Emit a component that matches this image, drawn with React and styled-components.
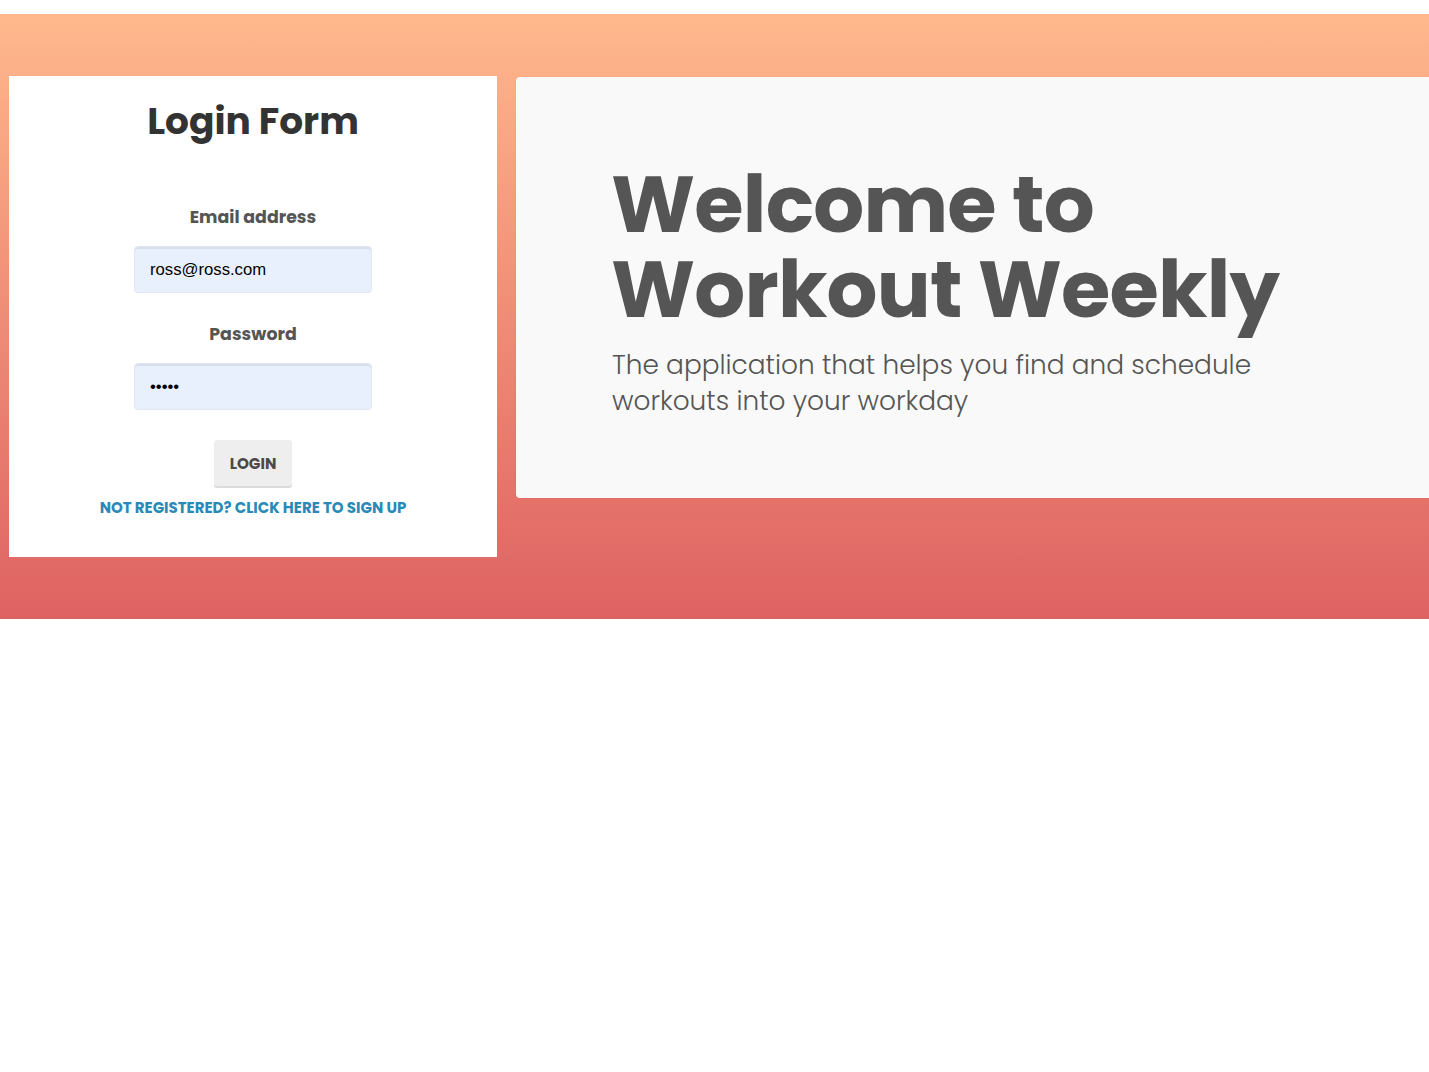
import React, { useState } from "react";
import styled, { createGlobalStyle } from "styled-components";

const GlobalStyle = createGlobalStyle`
  html, body {
    margin: 0;
    padding: 0;
    background: #ffffff;
    overflow-x: hidden;
  }
  body {
    font-family: "Poppins", Inter, "Noto Sans", sans-serif;
  }
`;

const Page = styled.div`
  padding-top: 14px;
`;

const Hero = styled.section`
  height: 605px;
  background: linear-gradient(to bottom, #ffb88c, #de6262);
  overflow: hidden;
  display: flex;
  align-items: flex-start;
  gap: 19px;
  padding: 62px 0 0 9px;
  box-sizing: border-box;
`;

const LoginCard = styled.div`
  flex: 0 0 488px;
  height: 481px;
  background: #ffffff;
  box-sizing: border-box;
  padding-top: 21px;
  display: flex;
  flex-direction: column;
  align-items: center;
`;

const Title = styled.h2`
  margin: 0 0 60px;
  font-size: 37.5px;
  line-height: 48px;
  font-weight: 700;
  color: #333;
`;

const StyledForm = styled.form`
  display: flex;
  flex-direction: column;
  align-items: center;
`;

const Label = styled.label`
  font-size: 17.4px;
  line-height: 24px;
  font-weight: 700;
  color: #555;
  margin: ${(props) => (props.$first ? "0" : "29px")} 0 17px;
`;

const Input = styled.input`
  width: 238px;
  height: 47px;
  box-sizing: border-box;
  padding: 0 15px;
  font-family: "Liberation Sans", Arial, sans-serif;
  font-size: 16.7px;
  color: #000;
  background: #e8f0fe;
  border: 1px solid #e2e7ef;
  border-radius: 4px;
  box-shadow: inset 0 2px 0 rgba(0, 0, 0, 0.07);
  &:focus {
    outline: none;
  }
`;

const Button = styled.button`
  margin-top: 30px;
  width: 78px;
  height: 46px;
  padding: 0;
  border: none;
  border-radius: 3px;
  background: #eeeeee;
  box-shadow: 0 2px 0 #dcdcdc;
  font-family: inherit;
  font-size: 15.2px;
  font-weight: 700;
  color: #4a4a4a;
  cursor: pointer;
`;

const SignUpLink = styled.a`
  margin-top: 12px;
  font-size: 15px;
  line-height: 20px;
  font-weight: 700;
  color: #2a89b8;
  text-decoration: none;
  text-transform: uppercase;
`;

const Jumbotron = styled.div`
  flex: 0 0 1000px;
  height: 421px;
  margin-top: 1px;
  background: #f9f9f9;
  border-radius: 4px;
  box-shadow: 0 0 2px rgba(0, 0, 0, 0.08);
  box-sizing: border-box;
  padding: 85px 0 0 95px;
`;

const Heading = styled.h1`
  margin: 0;
  font-size: 80px;
  line-height: 85px;
  font-weight: 700;
  color: #555;
  letter-spacing: -0.8px;
`;

const Lead = styled.p`
  margin: 15px 0 0;
  padding-left: 1px;
  font-size: 26.4px;
  line-height: 36px;
  font-weight: 300;
  color: #555;
`;

export default function App() {
  const [form, setForm] = useState({ email: "ross@ross.com", password: "12345" });

  const handleChange = (e) => {
    setForm({ ...form, [e.target.name]: e.target.value });
  };

  return (
    <Page>
      <GlobalStyle />
      <Hero>
        <LoginCard>
          <Title>Login Form</Title>
          <StyledForm onSubmit={(e) => e.preventDefault()}>
            <Label $first htmlFor="email">Email address</Label>
            <Input id="email" type="email" name="email" value={form.email} onChange={handleChange} />
            <Label htmlFor="password">Password</Label>
            <Input id="password" type="password" name="password" value={form.password} onChange={handleChange} />
            <Button type="submit">LOGIN</Button>
            <SignUpLink href="#">Not registered? Click here to sign up</SignUpLink>
          </StyledForm>
        </LoginCard>
        <Jumbotron>
          <Heading>
            Welcome to
            <br />
            Workout Weekly
          </Heading>
          <Lead>
            The application that helps you find and schedule
            <br />
            workouts into your workday
          </Lead>
        </Jumbotron>
      </Hero>
    </Page>
  );
}
